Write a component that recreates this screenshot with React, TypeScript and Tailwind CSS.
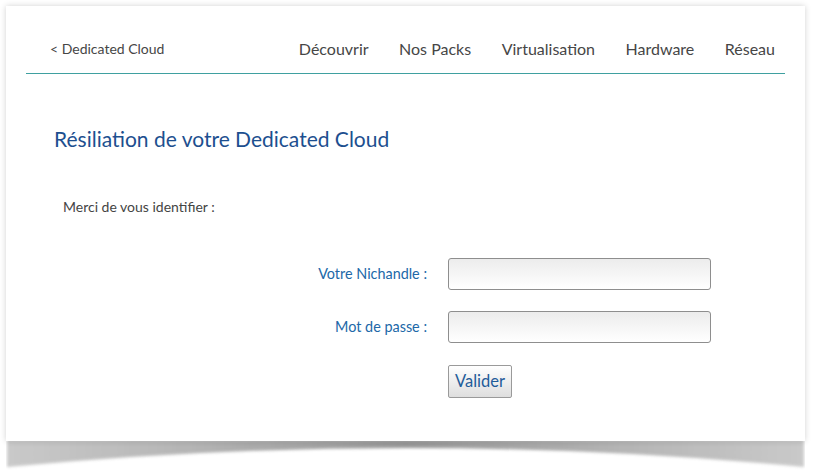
import React from "react";

const NAV = ["Découvrir", "Nos Packs", "Virtualisation", "Hardware", "Réseau"];

export default function App() {
  return (
    <main
      className="min-h-[471px] w-[819px] bg-white pl-[6px] pt-[6px]"
      style={{ fontFamily: "Lato, 'Open Sans', sans-serif" }}
    >
      <div className="relative w-[799px]">
        <CurlShadow />

        <div className="relative z-10 h-[435px] bg-white px-[20px] shadow-[0_0_6px_rgba(0,0,0,0.18)]">
          <header className="flex items-center pb-[14px] pl-[24px] pr-[10px] pt-[33px] leading-[20px]">
            <a className="text-[14px] text-[#464646]">&lt; Dedicated Cloud</a>
            <nav className="ml-auto flex gap-[30.5px] text-[16px] text-[#464646]">
              {NAV.map((item) => (
                <a key={item}>{item}</a>
              ))}
            </nav>
          </header>
          <div className="h-px bg-[#3fa0a0]" />

          <h1 className="mt-[52px] pl-[28px] text-[21px] leading-[26px] text-[#1d4f8f]">
            Résiliation de votre Dedicated Cloud
          </h1>

          <p className="mt-[46px] pl-[37px] text-[14px] leading-[18px] text-[#444]">
            Merci de vous identifier :
          </p>

          <form className="mt-[42px] flex flex-col gap-[21px]">
            <Row label="Votre Nichandle :" />
            <Row label="Mot de passe :" type="password" />
            <div className="pl-[422px] pt-px">
              <button
                type="button"
                className="h-[33px] w-[64px] rounded-[2px] border border-[#9a9a9a] bg-gradient-to-b from-white to-[#dedede] text-[16.5px] text-[#1f5c9a]"
              >
                Valider
              </button>
            </div>
          </form>
        </div>
      </div>
    </main>
  );
}

function Row({ label, type = "text" }: { label: string; type?: string }) {
  return (
    <div className="flex items-center gap-[21px]">
      <label className="w-[401px] text-right text-[14.4px] text-[#2168a8]">{label}</label>
      <input
        type={type}
        className="h-[32px] w-[263px] rounded-[3px] border border-[#8e8e8e] bg-gradient-to-b from-[#ececec] to-white outline-none"
      />
    </div>
  );
}

function CurlShadow() {
  return (
    <svg
      className="absolute left-0 top-[430px] z-0"
      width="799"
      height="34"
      viewBox="0 0 799 34"
    >
      <defs>
        <filter id="blur" x="-5%" y="-50%" width="110%" height="200%">
          <feGaussianBlur stdDeviation="1.6" />
        </filter>
        <linearGradient id="side" x1="0" x2="1" y1="0" y2="0">
          <stop offset="0" stopColor="#c4c4c4" />
          <stop offset="0.2" stopColor="#b0b0b0" />
          <stop offset="0.5" stopColor="#8c8c8c" />
          <stop offset="0.8" stopColor="#b0b0b0" />
          <stop offset="1" stopColor="#c4c4c4" />
        </linearGradient>
      </defs>
      <path
        d="M1 4 L798 4 L798 31 Q600 12 400 12 Q200 12 1 31 Z"
        fill="url(#side)"
        filter="url(#blur)"
        opacity="0.9"
      />
    </svg>
  );
}
